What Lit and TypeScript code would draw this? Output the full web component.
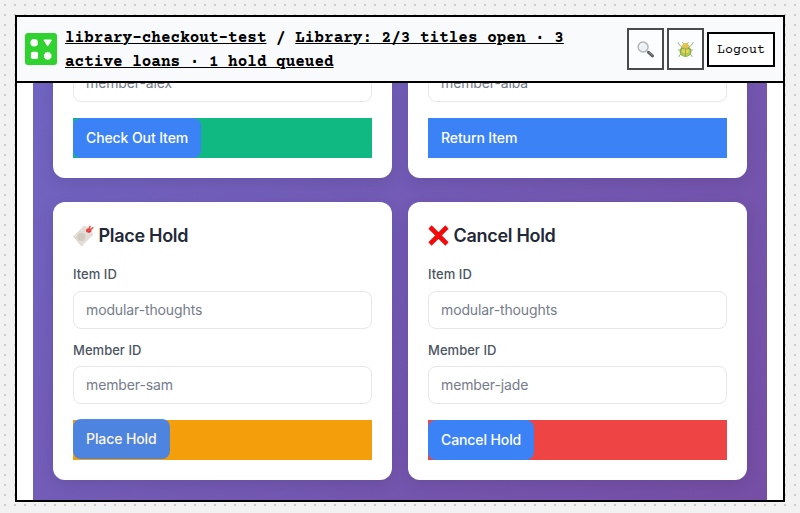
import { LitElement, html, css, svg, nothing } from "lit";
import { customElement, property } from "lit/decorators.js";
import { classMap } from "lit/directives/class-map.js";

const searchIcon = html`<svg width="17" height="17" viewBox="0 0 17 17">
  <path d="M10 10.2 11.4 11.6" stroke="#6d7479" stroke-width="1.5" />
  <path d="M11.6 11.4 15.4 14.9" stroke="#1c1f22" stroke-width="3" stroke-linecap="round" />
  <path d="M12.2 11.2 15.5 14.2" stroke="#777a7d" stroke-width=".7" />
  <circle cx="6.1" cy="6" r="5" fill="#e8eef3" stroke="#92979c" stroke-width="1.4" />
  <path d="M3 5.7Q3.7 3.2 6 2.9" fill="none" stroke="#fff" stroke-width="1" />
</svg>`;

const bugIcon = html`<svg width="17" height="17" viewBox="0 0 17 17">
  <g fill="none" stroke="#6c8c35" stroke-width=".9">
    <path d="M5 6 2.3 4 1 1.2M12 6l2.7-2L16 1.2M3.5 9H.8M13.5 9h2.7M4.5 12.5 2.5 14l-.7 2M12.5 12.5l2 1.5.7 2M7 3 5.4 1M10 3l1.6-2" />
  </g>
  <ellipse cx="8.5" cy="10.4" rx="5.9" ry="5.6" fill="#5c930a" />
  <path d="M8.5 7v8.5Q4.2 15 4 10.8 4.3 7.8 8.5 7Z" fill="#8fb50e" />
  <path d="M8.5 7v8.5q4.3-.5 4.5-4.7Q12.7 7.8 8.5 7Z" fill="#9cb80c" />
  <ellipse cx="8.5" cy="9.7" rx="3.7" ry="2.4" fill="#e8c806" />
  <path d="M4.8 6Q5 2.2 8.5 2.1T12.2 6Q8.5 8.2 4.8 6Z" fill="#dcae08" />
  <path d="M8.5 7.2v8.3M4 7.4q4.5 1.7 9 0" fill="none" stroke="#55780e" stroke-width=".7" />
</svg>`;

const tagIcon = svg`
  <path d="M.5 11.2 10.8.8 17 2.4 20.3 9.8 9.4 20.5 8 20Z" fill="#e3ddd5" />
  <path d="M.5 11.2 8 20l1.4.5" fill="none" stroke="#cfc8be" stroke-width=".8" />
  <circle cx="8.3" cy="12" r="4" fill="#d2cbc2" />
  <circle cx="15.5" cy="5.5" r="2.2" fill="#b9aaa4" />
  <path d="M13.7 6.1Q13.7 3.8 16 4.1T17.8 6Q15.7 8 13.7 6.1Z" fill="#ed5050" stroke="#df3939" stroke-width="1.2" />
  <path d="M16 4.6 17.2.7M17 5.2 20.3 2.3" stroke="#e94a4a" stroke-width="1.5" />`;

const crossIcon = svg`<path d="M2 2 19 19M19 2 2 19" stroke="#f20a0a" stroke-width="4.6" />`;

@customElement("form-card")
class FormCard extends LitElement {
  @property() heading = "";
  @property() icon = "";
  @property() member = "";
  @property() tone = "";
  @property({ type: Boolean }) hovered = false;

  static styles = css`
    :host { display: block; background: #fff; border-radius: 12px; padding: 20px; box-sizing: border-box; box-shadow: 0 4px 16px rgba(0, 0, 0, 0.1); }
    * { box-sizing: border-box; }
    h2 { display: flex; align-items: center; gap: 4.5px; margin: 0 0 16px; height: 27px; font-size: 18px; line-height: 27px; font-weight: 600; letter-spacing: -0.3px; color: #1f2937; }
    h2 svg { flex: none; }
    label { display: block; font-size: 13px; line-height: 19.5px; font-weight: 500; letter-spacing: 0.03px; color: #4b5563; margin-bottom: 6px; }
    input { display: block; width: 100%; height: 38px; margin: 0 0 12px; padding: 0 12px; border: 1px solid #e5e7eb; border-radius: 8px; background: #fff; font: 400 14px Inter, sans-serif; letter-spacing: -0.12px; }
    input.member { padding-bottom: 1px; }
    input::placeholder { color: #757c8a; opacity: 1; }
    .bar { display: flex; height: 40px; margin-top: 16px; }
    .green { background: #10b981; }
    .blue { background: #3b82f6; }
    .orange { background: #f59e0b; }
    .red { background: #ef4444; }
    button { height: 40px; border: 0; border-radius: 8px; padding: 0 13px 2px; background: #3b82f6; color: #fff; font: 500 14px Inter, sans-serif; letter-spacing: -0.1px; white-space: nowrap; }
    .hovered { opacity: 0.9; transform: translateY(-1px); }
  `;

  render() {
    const glyph = this.icon === "tag" ? tagIcon : crossIcon;
    return html`
      ${this.heading
        ? html`<h2><svg width="21" height="21" viewBox="0 0 21 21">${glyph}</svg><span>${this.heading}</span></h2>
            <label>Item ID</label><input placeholder="modular-thoughts" />
            <label>Member ID</label>`
        : nothing}
      <input class="member" placeholder=${this.member} />
      <div class="bar ${this.tone}">
        <button class=${classMap({ hovered: this.hovered })}><slot></slot></button>
      </div>`;
  }
}

@customElement("app-root")
class AppRoot extends LitElement {
  static styles = css`
    :host { display: block; height: 513px; padding: 15px 15px 11px; box-sizing: border-box; background: linear-gradient(90deg, #f2f2f2 8px, transparent 0) -4px 0 / 10px 10px, linear-gradient(#f2f2f2 8px, transparent 0) 0 -4px / 10px 10px, #ccc; font-family: Inter, sans-serif; }
    * { box-sizing: border-box; }
    .frame { height: 487px; border: 2px solid #000; background: #fff; display: flex; flex-direction: column; }
    header { flex: none; display: flex; align-items: center; height: 66px; padding: 0 8px; border-bottom: 2px solid #000; background: #f8fafc; }
    .logo { flex: none; margin-right: 8px; }
    .title { flex: 1; margin-right: 50px; padding-top: 2px; font: 700 16px/24px "Courier Prime", "Liberation Mono", monospace; color: #000; }
    .title a { text-decoration: underline; text-decoration-thickness: 1px; text-underline-offset: 1px; }
    .tools { display: flex; align-items: center; gap: 3px; }
    .tools button { border: 2px solid #000; background: #fff; padding: 0; color: #000; }
    .icon { width: 37px; height: 42px; opacity: 0.7; display: grid; place-items: center; }
    .icon svg { display: block; }
    .tools .logout { width: 68px; height: 35px; padding-top: 2px; font: 13.333px "Courier Prime", "Liberation Mono", monospace; }
    main { flex: 1; min-height: 0; overflow: hidden; margin: 0 16px; padding: 0 20px 20px; background: linear-gradient(135deg, #7064c2, #764ea5); display: flex; flex-direction: column; justify-content: flex-end; }
    .grid { flex: none; display: grid; grid-template-columns: 1fr 1fr; gap: 24px 16px; }
  `;

  render() {
    return html`
      <div class="frame">
        <header>
          <svg class="logo" width="32" height="32" viewBox="0 0 32 32">
            <rect width="32" height="32" rx="3" fill="#2fd22f" />
            <g fill="#fff">
              <circle cx="9.2" cy="9.8" r="3.8" />
              <path d="M19.2 6.4h7q1.1.2.5 1.1l-3.3 5.3q-.7.8-1.4 0l-3.3-5.3q-.5-.9.5-1.1Z" />
              <rect x="5.9" y="18.8" width="7.2" height="7.3" rx="1.8" />
              <path d="m22.7 18.8 1.1.8 1.4-.1.4 1.4 1.1.8-.5 1.2.5 1.3-1.2.8-.4 1.3-1.3-.1-1.1.7-1.1-.7-1.4.1-.4-1.3-1.1-.8.5-1.3-.5-1.2 1.1-.8.4-1.4 1.4.1Z" />
            </g>
          </svg>
          <div class="title"><a>library-checkout-test</a> / <a>Library: 2/3 titles open · 3 active loans · 1 hold queued</a></div>
          <div class="tools">
            <button class="icon">${searchIcon}</button>
            <button class="icon">${bugIcon}</button>
            <button class="logout">Logout</button>
          </div>
        </header>
        <main>
          <div class="grid">
            <form-card member="member-alex" tone="green">Check Out Item</form-card>
            <form-card member="member-alba" tone="blue">Return Item</form-card>
            <form-card heading="Place Hold" icon="tag" member="member-sam" tone="orange" hovered>Place Hold</form-card>
            <form-card heading="Cancel Hold" icon="cross" member="member-jade" tone="red">Cancel Hold</form-card>
          </div>
        </main>
      </div>`;
  }
}
